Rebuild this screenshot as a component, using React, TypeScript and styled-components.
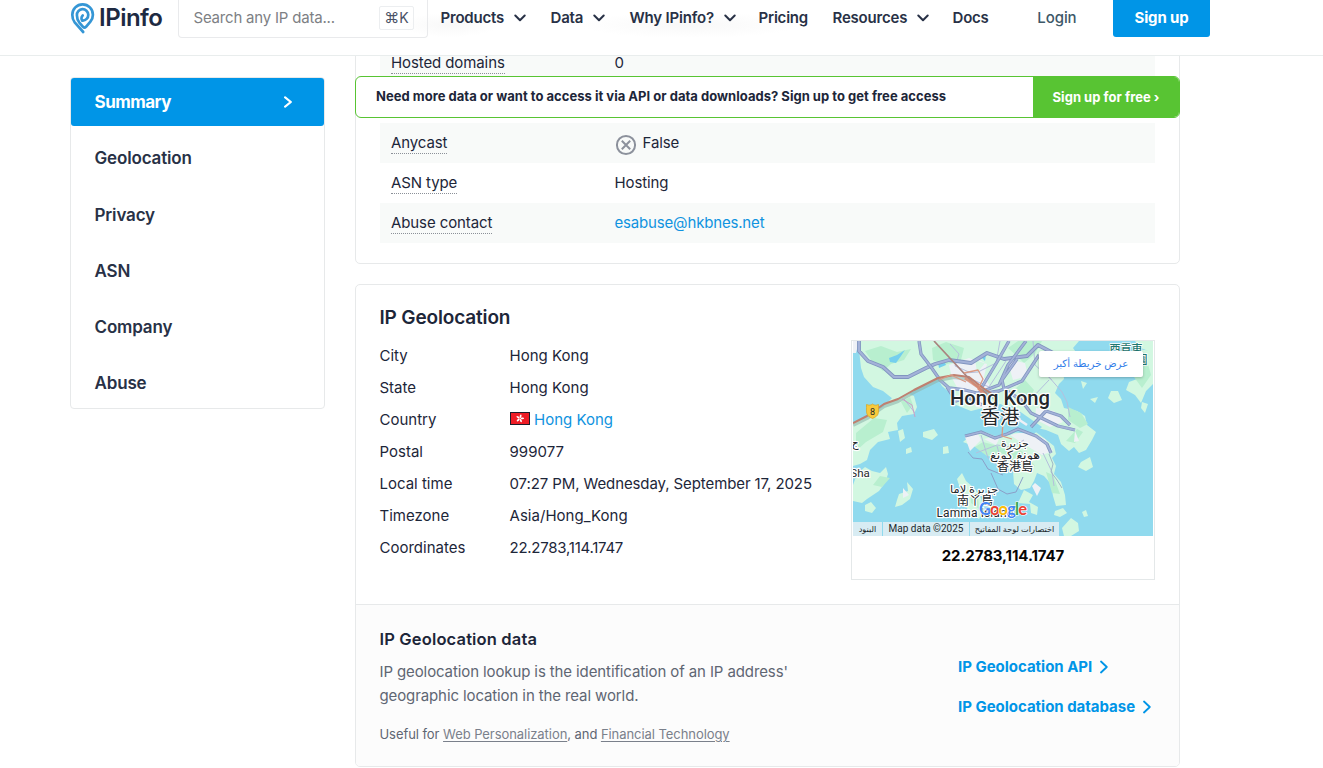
import React from "react";
import styled, { createGlobalStyle } from "styled-components";

const Global = createGlobalStyle`
  * { box-sizing: border-box; }
  html, body { margin: 0; padding: 0; background: #fff; overflow: hidden; }
  body { font-family: Inter, "Noto Sans", sans-serif; color: #1d2639; font-size: 15px; }
  a { color: inherit; text-decoration: none; }
`;

const Page = styled.div`
  height: 768px;
  overflow: hidden;
  display: flex;
  flex-direction: column;
`;

const Header = styled.header`
  height: 56px;
  flex: none;
  display: flex;
  align-items: flex-start;
  padding: 0 113px 0 70px;
  border-bottom: 1px solid #e9eded;
  background:
    radial-gradient(ellipse 50px 12px at 450px 25px, #f8f8f8, transparent),
    radial-gradient(ellipse 110px 13px at 690px 25px, #f8f8f8, transparent),
    #fff;
`;

const Logo = styled.div`
  width: 108px;
  height: 36px;
  display: flex;
  align-items: center;
  gap: 4px;
  font: 600 24px/36px Inter, sans-serif;
  letter-spacing: -0.5px;
  color: #1e2a42;
`;

const SearchBox = styled.div`
  width: 250px;
  height: 38px;
  display: flex;
  align-items: center;
  justify-content: space-between;
  padding: 0 13px 2px 14.5px;
  border: 1px solid #e9eaec;
  border-top: 0;
  border-radius: 0 0 4px 4px;
  letter-spacing: -0.2px;
  color: #7d8084;
`;

const Shortcut = styled.kbd`
  height: 24px;
  width: 35px;
  border: 1px solid #eceef0;
  border-radius: 2px;
  display: flex;
  align-items: center;
  justify-content: center;
  font: 400 14px Inter, sans-serif;
  letter-spacing: 0;
  color: #4a5266;
  span { font-size: 15px; }
`;

const Nav = styled.nav`
  height: 35px;
  display: flex;
  align-items: center;
  margin-left: 12.5px;
`;

const NavItem = styled.a<{ $w: number }>`
  width: ${(p) => p.$w}px;
  display: flex;
  align-items: center;
  gap: 10px;
  white-space: nowrap;
  font-size: 15px;
  font-weight: 600;
  letter-spacing: -0.2px;
  color: #283146;
`;

const Login = styled.a`
  margin-left: auto;
  line-height: 36px;
  font-weight: 500;
  letter-spacing: -0.1px;
  color: #3d5868;
`;

const SignUp = styled.a`
  margin-left: 36.5px;
  width: 97px;
  height: 37px;
  line-height: 36px;
  text-align: center;
  border-radius: 0 0 3px 3px;
  background: #0095e7;
  color: #fff;
  font-weight: 700;
  letter-spacing: -0.15px;
`;

const Body = styled.main`
  flex: 1;
  min-height: 0;
  overflow: hidden;
  display: flex;
  align-items: flex-start;
  gap: 30px;
  padding-left: 70px;
`;

const Sidebar = styled.aside`
  width: 255px;
  height: 332px;
  margin-top: 21px;
  border: 1px solid #e7e9ea;
  border-radius: 4px;
  display: flex;
  flex-direction: column;
  gap: 8.3px;
`;

const SideItem = styled.a<{ $active?: boolean }>`
  height: 48px;
  flex: none;
  display: flex;
  align-items: center;
  justify-content: space-between;
  padding: 0 32px 0 23.5px;
  border-radius: 3px;
  font-size: 17px;
  font-weight: ${(p) => (p.$active ? 700 : 600)};
  letter-spacing: ${(p) => (p.$active ? -0.5 : -0.15)}px;
  background: ${(p) => (p.$active ? "#0095e7" : "transparent")};
  color: ${(p) => (p.$active ? "#fff" : "#283146")};
`;

const Content = styled.div`
  position: relative;
  width: 825px;
  display: flex;
  flex-direction: column;
  gap: 20px;
`;

const Card = styled.section`
  border: 1px solid #e7e9ea;
  border-radius: 5px;
  overflow: hidden;
  background: #fff;
`;

const AsnCard = styled(Card)`
  margin-top: -14px;
  padding: 0 24px 20px;
`;

const Row = styled.div<{ $striped?: boolean }>`
  height: 40px;
  display: grid;
  grid-template-columns: 223.5px 1fr;
  align-items: center;
  padding-left: 11px;
  letter-spacing: -0.1px;
  background: ${(p) => (p.$striped ? "#f8faf9" : "transparent")};
`;

const Term = styled.span`
  justify-self: start;
  line-height: 20px;
  margin-top: 1px;
  border-bottom: 1px dotted #8b9098;
`;

const Value = styled.span`
  display: flex;
  align-items: center;
  gap: 6px;
  padding-bottom: 2px;
`;

const CountryValue = styled.span`
  display: flex;
  align-items: center;
  gap: 4.5px;
`;

const Link = styled.a`
  color: #0f93e0;
`;

const Email = styled(Link)`
  letter-spacing: -0.17px;
`;

const Banner = styled.div`
  position: absolute;
  top: 20px;
  left: 0;
  width: 825px;
  height: 42px;
  display: flex;
  border: 1px solid #58c433;
  border-radius: 6px;
  overflow: hidden;
  background: #fff;
`;

const BannerText = styled.span`
  flex: 1;
  padding-left: 20px;
  line-height: 39px;
  font-size: 13px;
  font-weight: 700;
  letter-spacing: 0.02px;
`;

const BannerButton = styled.a`
  width: 146px;
  line-height: 40px;
  text-align: center;
  background: #58c433;
  color: #fff;
  font-size: 13px;
  font-weight: 700;
  letter-spacing: 0.03px;
`;

const GeoTop = styled.div`
  height: 319px;
  display: flex;
  justify-content: space-between;
  padding: 0 24px 0 23.5px;
`;

const Title = styled.h2`
  margin: 20px 0 8px;
  font-size: 19px;
  line-height: 26px;
  font-weight: 600;
  letter-spacing: -0.15px;
`;

const Fact = styled.div`
  height: 32px;
  display: grid;
  grid-template-columns: 130px 1fr;
  align-items: center;
  white-space: nowrap;
`;

const FactValue = styled.span<{ $ls?: number }>`
  letter-spacing: ${(p) => p.$ls ?? 0.03}px;
`;

const MapCard = styled.div`
  width: 304px;
  height: 240px;
  margin-top: 55px;
  padding: 0 1px;
  border: 1px solid #e4e8e9;
`;

const MapFrame = styled.div`
  position: relative;
  height: 195px;
  overflow: hidden;
  svg { display: block; }
`;

const MapButton = styled.a`
  position: absolute;
  top: 10px;
  left: 186px;
  width: 104px;
  height: 26px;
  border-radius: 2px;
  background: #fff;
  box-shadow: 0 1px 3px rgba(0, 0, 0, 0.25);
  color: #2f7de9;
  text-align: center;
  font: 10.2px/25px "Liberation Sans", "DejaVu Sans", sans-serif;
`;

const MapCredits = styled.div`
  position: absolute;
  left: 0;
  bottom: 0;
  height: 14px;
  display: flex;
  gap: 1px;
`;

const Credit = styled.span<{ $w: number; $size?: number }>`
  width: ${(p) => p.$w}px;
  background: #d8ecf3;
  text-align: center;
  white-space: nowrap;
  color: #20282c;
  font: 10px/14px Roboto, "Liberation Sans", "DejaVu Sans", sans-serif;
  font-size: ${(p) => p.$size ?? 8.2}px;
`;

const MapCaption = styled.div`
  padding-top: 10px;
  text-align: center;
  line-height: 20px;
  font-weight: 700;
  letter-spacing: -0.1px;
  color: #060606;
`;

const GeoBottom = styled.div`
  height: 162px;
  border-top: 1px solid #e7e9ea;
  background: #fcfcfc;
  display: flex;
  justify-content: space-between;
  padding: 0 27px 0 23.5px;
`;

const SubTitle = styled.h3`
  margin: 22px 0 9px;
  font-size: 16.5px;
  line-height: 24px;
  font-weight: 600;
  letter-spacing: 0.15px;
`;

const Copy = styled.p`
  margin: 0;
  line-height: 24px;
  letter-spacing: -0.11px;
  color: #5f6673;
`;

const Useful = styled.p`
  margin: 16px 0 0;
  font-size: 13px;
  line-height: 20px;
  letter-spacing: -0.06px;
  color: #5f6673;
  u { color: #7a808b; text-underline-offset: 2px; }
`;

const Links = styled.div`
  width: 194px;
  margin-top: 42px;
`;

const ArrowLink = styled.a`
  height: 40px;
  display: flex;
  align-items: center;
  gap: 8px;
  white-space: nowrap;
  font-weight: 700;
  letter-spacing: -0.02px;
  color: #0095e7;
  span { padding-bottom: 1px; }
`;

const Down = () => (
  <svg width="12" height="8" viewBox="0 0 12 8" fill="none" stroke="#283146" strokeWidth="2" strokeLinecap="round" strokeLinejoin="round">
    <path d="M1.3 1.5 6 6.2l4.7-4.7" />
  </svg>
);

const Right = ({ h = 12, sw = 2 }: { h?: number; sw?: number }) => (
  <svg width="8" height={h} viewBox="0 0 8 14" preserveAspectRatio="none" fill="none" stroke="currentColor" strokeWidth={sw} strokeLinecap="round" strokeLinejoin="round">
    <path d="m1 1.500 5.800 5.500L1 12.500" />
  </svg>
);

const LogoMark = () => (
  <svg width="25" height="32" viewBox="0 0 25 32" fill="none" stroke="#3596d5" strokeWidth="2.7" strokeLinecap="round" strokeLinejoin="round">
    <path d="M13.200 30 4.700 20.300C2.800 18 2.300 15.200 2.300 12.700a10.300 10.300 0 0 1 20.600 0c0 2.800-.8 5-2.500 7L16 24.800c-1 1-2 1-3 0l-3.600-4.200C7.600 18.400 6.900 16.500 6.900 13.300a5.700 5.700 0 1 1 5.700 5.300" />
    <path d="M12.300 18.600c-1-1.200-1.300-3.600.4-5.100" />
  </svg>
);

const FalseIcon = () => (
  <svg width="22" height="22" viewBox="0 0 22 22" fill="none" stroke="#8c919c" strokeWidth="2" style={{ marginTop: 5 }}>
    <circle cx="11" cy="11" r="9.1" />
    <path d="m6.800 6.800 8.400 8.400m0-8.400-8.400 8.400" />
  </svg>
);

const Flag = () => (
  <svg width="20" height="13" viewBox="0 0 20 13" style={{ marginTop: -1 }}>
    <rect x=".5" y=".5" width="19" height="12" fill="#ee1c25" stroke="#1d1d2b" />
    <g fill="#fff">
      {[0, 72, 144, 216, 288].map((r) => (
        <ellipse key={r} cx="10" cy="4.200" rx=".9" ry="1.800" transform={`rotate(${r + 14} 10 6.500)`} />
      ))}
    </g>
  </svg>
);

const coastRoad = "M6 0l0 10 9 10 15 6 11 10 14 0 18-9 9-4 14-4 22 3 16-10 17 6 23-3 11-11 17 9";
const cityRoads =
  "M66 0l2 13 10 13 9 13 9 8 16 2 16 4 18-3 23-10 17-26M156 0l-12 21-15 25M173 0l-18 24-9 20-21 8M164 18l-15 21 2 9 17 11 10 13 27 13 17 4M178 86l15-16 15 5 9 9M112 95l16-4 14 6 12-4 11-5 18 7 11 8 4 9M94 46l9 14 12-4 14 8";

const GeoMap = () => (
  <svg width="300" height="195" viewBox="0 0 300 195">
    <rect width="300" height="195" fill="#90daee" />
    <g fill="#d2f7e1">
      <path d="M5 0H226l-6 7 5 7-9 3 3 8-9 4 1 9-5 5-4 9 6 6 3 9 13 3 8 5 2 9 9 7-4 8-6 10-7 3-5-6-5 4-8-7-3-9-12-5-13-3-18-11-14-12-18 4-12 3-15-6-5-11-9-8-4-7-12 6-10 3-12 10-11 1-10-8-10-4-9-10-3-9z" />
      <path d="M0 82l16-8 14-8 13-13 8-2 10 4 3 11-3 7-12 2-5 7 1 7-10 2 2 7-12 3-8 8-3 10-7 4-7 2z" />
      <path d="M110 101l8-7 14-3 10 4 15-1 12-6 11 1 11 8 10 8 2 8-4 4 4 8-2 8 7 8 4 13 1 10-10 1-3-10-2-12-7-8-7-3-3 8-4 7-9 2-7-6-1-13-12-6-6-10-9-1-5-5z" />
      <path d="M0 144l4-11 8-7 7 4 8 2 6-6 2 7-3 9-6 8-12 8-5 4-9-2z" />
      <path d="M104 138l5-6 4 8 8 7 7 10 3 13-5 8-9-5-4-8 2-10-7-5z" />
      <path d="M274 14l9-6 17 2v33l-7 7-5 12-6-8-9-5 3-8 8-3-3-7-8 1z" />
      <path d="M282 0h18v12l-12-5zM171 149l9 5-4 7 9 5-1 8-6-2-1-9-12-1z" />
      <path d="M12 164l6-3 5 6-4 5-7-2zM46 153l9-3-1-9 6 7-3 10-8 6-7 2 2-7z" />
      <path d="M45 90l5-2 2 9-5 4zM53 108l5-2 1 5-6 2zM70 91l11-3 4 6-6 5-9-3zM90 106l5-1 1 7-6 1zM258 50l7 0 4 9-8 3-6-5zM237 58l8-2-3 6zM289 61l6 2-3 9-4-5zM228 40l6 2-4 6zM228 121l9-5 3 10-7 4-8-4zM202 170l8-3 4 5-7 4-6-2zM229 171l4-2 2 6-4 1zM209 187l9-10 7 5 1 8-8 5h-7z" />
    </g>
    <g fill="#b8efcf">
      <path d="M12 10l16-5 16 6 14-3-7 11-13 4-8 7-10-8zM79 7l14-6 18 6-3 12-17 5-11-5zM155 7l10-7h24l-7 13-11 9-7-7zM195 25l12-8 8 4-6 12-9 3zM111 34l8-4 5 7-6 6zM162 48l10-9 9 10-6 11z" />
      <path d="M3 92l18-15 13 2-4 12-17 10-10 9zM48 61l9-5 3 8-6 8zM122 106l8-5 19 5-4 10-11-1zM145 108l15-3 13 8 9 12-9 5-15-7zM193 131l7 3 7 19-8-1zM215 66l13 6 7 11-8 4-12-8zM27 135l10 2-8 9-9-2zM117 147l8 8 1 13-8-6zM275 17l17-5 6 22-9 13-8-11zM213 100l9 2 8-11-6-3z" />
    </g>
    <g fill="#eef1f6">
      <path d="M96 24l20-7 18 6-4 17-8 16-15-4-8-15zM110 40l22-3 8 13-5 18-12-2zM154 18l18 4 3 13-15 4zM183 67l18 3 9 11-13 5-15-8zM131 98l17-4-5 10zM157 94l18-4 17 8 8 12-11 4-20-12zM112 96l12-5 4 8-11 11zM124 32l8-10-10-5z" />
      <path d="M182 142l6 5-4 8-5-10zM50 147l6 7-6 3zM222 90l4 10-5 1zM0 0h6L3 12H0z" />
    </g>
    <path d="M141 68l18-3 30 21-8 7-35-3z" fill="#90daee" />
    <path d="M154 71l20 13" stroke="#edf0f6" strokeWidth="2.500" />
    <path d="M36 17l8-3 8-5-4 6-5 7-6-1zM85 22l6-2 2 4-7 3zM128 16l5-2-1 6z" fill="#74cfee" />
    <path
      d="M147 0l-4 22-18 9-13 1M153 20l-17 26-20-9M180 0l2 24 17 15M196 36l13 15 5 10 3 15M178 58l18-19M97 3l9 10-4 12 14 6M123 112l21-8 14 2 13-7M144 105l5 17 15 3M128 94l7 23 15 12M190 112l9 19 2 14M51 58l11 14"
      fill="none"
      stroke="#b4bfdc"
    />
    <g fill="none" strokeLinejoin="round">
      <path d={coastRoad} stroke="#8195c0" strokeWidth="3.900" />
      <path d={coastRoad} stroke="#a3b2d8" strokeWidth="2.200" />
      <path d={cityRoads} stroke="#8195c0" strokeWidth="3.300" />
      <path d={cityRoads} stroke="#a3b2d8" strokeWidth="1.800" />
      <path d="M0 84l14-7 17-12 14-5 16-9 24-12 16-3 15 2 14 11 12 8" stroke="#8fb5ad" strokeWidth="4" opacity=".6" />
      <path d="M0 82l14-7 17-12 14-5 16-9 24-12 16-3 15 2 14 11 12 8" stroke="#bf8070" strokeWidth="2" />
      <path d="M81 0l39 42 14 11" stroke="#a9837f" strokeWidth="1.700" />
      <path d="M111 32l14-3 5 9-5 10 12 12M86 39l12-5 15 7M151 68l-2 27 10 3" stroke="#d99a84" strokeWidth="1.300" />
      <path d="M112 37l13 9 12 14" stroke="#d98a70" strokeWidth="3" opacity=".8" />
      <path d="M49 58l10 6 3 12" stroke="#c99fc7" />
      <path d="M115 111l5 6 9 1 6 10 15 6M138 132l7 16 9 5 9-2 7-15" stroke="#8b9fc8" />
      <path d="M196 113l4 10-2 8 6 8 5 8" stroke="#9fb6c4" />
    </g>
    <path d="M13.500 63.500c3 1 4 1 6-.5 2 1.500 3 1.500 6 .5 0 9 1 11-6 14-7-3-6-5-6-14z" fill="#f8ca3d" stroke="#d6a523" strokeWidth=".7" />
    <g fontFamily='Roboto, "Noto Sans CJK TC", "DejaVu Sans", sans-serif' fill="#24282b" stroke="#fff" strokeWidth="2.400" strokeLinejoin="round" paintOrder="stroke" textAnchor="middle">
      <text x="19.500" y="74" fontSize="9" strokeWidth="0">8</text>
      <text x="147" y="63.500" fontSize="20.500" fontWeight="500" textLength="100" lengthAdjust="spacingAndGlyphs">Hong Kong</text>
      <text x="147" y="83" fontSize="19.500">香港</text>
      <text x="162" y="106" fontSize="11">جزيرة</text>
      <text x="162" y="118" fontSize="11.500" textLength="50" lengthAdjust="spacingAndGlyphs">هونغ كونغ</text>
      <text x="162" y="130" fontSize="12">香港島</text>
      <text x="121" y="152" fontSize="11" textLength="48" lengthAdjust="spacingAndGlyphs">جزيرة لاما</text>
      <text x="122" y="164" fontSize="12">南丫島</text>
      <text x="122" y="176" fontSize="12" textLength="77">Lamma Island</text>
      <text x="7" y="136" fontSize="11.500">Sha</text>
      <text x="2" y="106" fontSize="11">ج</text>
      <g fill="#1f7770" fontWeight="500" strokeWidth="1.500">
        <text x="273" y="12" fontSize="11">西貢東</text>
        <text x="289" y="23" fontSize="11">園</text>
      </g>
    </g>
    <text x="126" y="174" fontFamily="Lato, sans-serif" fontSize="16.500" textLength="48" stroke="#fff" strokeWidth="1.200" paintOrder="stroke" fontWeight="700">
      <tspan fill="#4285f4">G</tspan><tspan fill="#ea4335">o</tspan><tspan fill="#fbbc05">o</tspan><tspan fill="#4285f4">g</tspan><tspan fill="#34a853">l</tspan><tspan fill="#ea4335">e</tspan>
    </text>
  </svg>
);

const facts: { label: string; value?: string; ls?: number }[] = [
  { label: "City", value: "Hong Kong" },
  { label: "State", value: "Hong Kong" },
  { label: "Country" },
  { label: "Postal", value: "999077" },
  { label: "Local time", value: "07:27 PM, Wednesday, September 17, 2025", ls: -0.1 },
  { label: "Timezone", value: "Asia/Hong_Kong" },
  { label: "Coordinates", value: "22.2783,114.1747", ls: -0.25 },
];

export default function App() {
  return (
    <Page>
      <Global />
      <Header>
        <Logo><LogoMark />IPinfo</Logo>
        <SearchBox>
          <span>Search any IP data...</span>
          <Shortcut><span>⌘</span>K</Shortcut>
        </SearchBox>
        <Nav>
          <NavItem $w={110}>Products <Down /></NavItem>
          <NavItem $w={79}>Data <Down /></NavItem>
          <NavItem $w={129}>Why IPinfo? <Down /></NavItem>
          <NavItem $w={74}>Pricing</NavItem>
          <NavItem $w={120}>Resources <Down /></NavItem>
          <NavItem $w={40}>Docs</NavItem>
        </Nav>
        <Login>Login</Login>
        <SignUp>Sign up</SignUp>
      </Header>
      <Body>
        <Sidebar>
          <SideItem $active>Summary <Right sw={2.2} /></SideItem>
          {["Geolocation", "Privacy", "ASN", "Company", "Abuse"].map((t) => (
            <SideItem key={t}>{t}</SideItem>
          ))}
        </Sidebar>
        <Content>
          <AsnCard>
            <Row $striped><Term>Hosted domains</Term><Value>0</Value></Row>
            <Row />
            <Row $striped><Term>Anycast</Term><Value><FalseIcon />False</Value></Row>
            <Row><Term>ASN type</Term><Value>Hosting</Value></Row>
            <Row $striped><Term>Abuse contact</Term><Value><Email>esabuse@hkbnes.net</Email></Value></Row>
          </AsnCard>
          <Banner>
            <BannerText>Need more data or want to access it via API or data downloads? Sign up to get free access</BannerText>
            <BannerButton>Sign up for free ›</BannerButton>
          </Banner>
          <Card>
            <GeoTop>
              <div>
                <Title>IP Geolocation</Title>
                {facts.map(({ label, value, ls }) => (
                  <Fact key={label}>
                    <span>{label}</span>
                    {value ? (
                      <FactValue $ls={ls}>{value}</FactValue>
                    ) : (
                      <CountryValue><Flag /><Link>Hong Kong</Link></CountryValue>
                    )}
                  </Fact>
                ))}
              </div>
              <MapCard>
                <MapFrame>
                  <GeoMap />
                  <MapButton dir="rtl">عرض خريطة أكبر</MapButton>
                  <MapCredits>
                    <Credit $w={29}>البنود</Credit>
                    <Credit $w={86} $size={10}>Map data ©2025</Credit>
                    <Credit $w={89}>اختصارات لوحة المفاتيح</Credit>
                  </MapCredits>
                </MapFrame>
                <MapCaption>22.2783,114.1747</MapCaption>
              </MapCard>
            </GeoTop>
            <GeoBottom>
              <div>
                <SubTitle>IP Geolocation data</SubTitle>
                <Copy>IP geolocation lookup is the identification of an IP address'<br />geographic location in the real world.</Copy>
                <Useful>Useful for <u>Web Personalization</u>, and <u>Financial Technology</u></Useful>
              </div>
              <Links>
                <ArrowLink><span>IP Geolocation API</span><Right h={14} sw={1.8} /></ArrowLink>
                <ArrowLink><span>IP Geolocation database</span><Right h={14} sw={1.8} /></ArrowLink>
              </Links>
            </GeoBottom>
          </Card>
        </Content>
      </Body>
    </Page>
  );
}
